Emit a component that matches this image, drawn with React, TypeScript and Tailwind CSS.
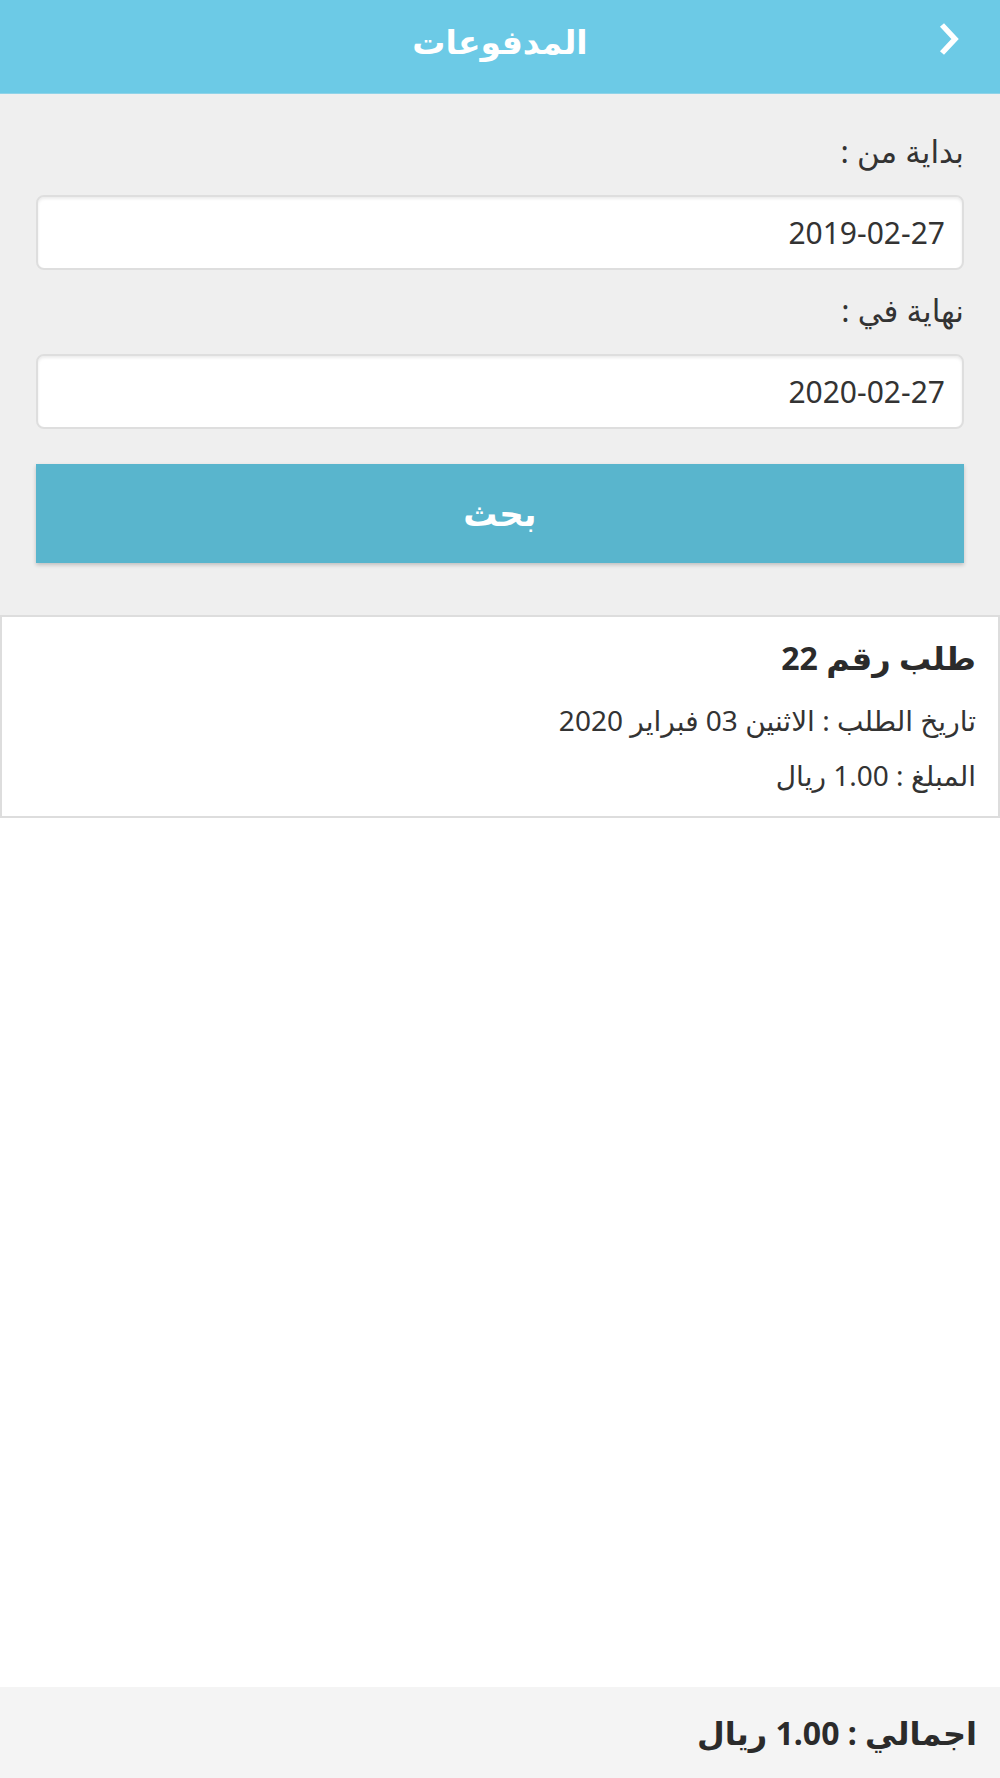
import React from "react";

const font = { fontFamily: '"Noto Sans", "DejaVu Sans", sans-serif' };

function DateField({ label, value }: { label: string; value: string }) {
  return (
    <div className="flex flex-col">
      <label className="text-[31px] leading-[40px] text-[#333]">{label}</label>
      <div className="mt-[24px] h-[75px] flex items-center pr-[17px] rounded-lg border-2 border-[#dedede] bg-white shadow-[inset_0_2px_3px_rgba(0,0,0,0.08)] text-[30px] text-[#333]">
        {value}
      </div>
    </div>
  );
}

export default function App() {
  return (
    <div dir="rtl" style={font} className="min-h-[1778px] w-full flex flex-col bg-white">
      <header className="h-[94px] pb-[10px] grid grid-cols-[1fr_auto_1fr] items-center bg-[#6ccae6] border-b border-[#8fd3e8]">
        <div className="flex pr-[38px] pb-[6px]">
          <svg width="26" height="34" viewBox="0 0 26 34" fill="none">
            <polyline points="6,3 19,17 6,31" stroke="white" strokeWidth="5.5" strokeLinejoin="miter" />
          </svg>
        </div>
        <h1 className="text-[33px] font-bold text-white">المدفوعات</h1>
        <div />
      </header>

      <section className="bg-[#efefef] px-[36px] pt-[37px] pb-[52px]">
        <DateField label="بداية من :" value="2019-02-27" />
        <div className="mt-[20px]">
          <DateField label="نهاية في :" value="2020-02-27" />
        </div>
        <button className="mt-[35px] w-full h-[99px] bg-[#59b5cd] text-white text-[34px] font-bold shadow-[0_2px_4px_rgba(0,0,0,0.2)]">
          بحث
        </button>
      </section>

      <div className="border-y-2 border-x-2 border-[#dddddd] bg-white pr-[22px] pt-[19px] pb-[21px] text-[#333]">
        <h2 className="text-[32px] leading-[44px] font-bold text-[#2b2b2b]">طلب رقم 22</h2>
        <p className="mt-[20px] text-[28px] leading-[40px]">تاريخ الطلب : الاثنين 03 فبراير 2020</p>
        <p className="mt-[15px] text-[28px] leading-[40px]">المبلغ : 1.00 ريال</p>
      </div>

      <div className="flex-1" />

      <footer className="h-[91px] flex items-center pr-[23px] bg-[#f4f4f4]">
        <span className="text-[32px] font-bold text-[#2b2b2b]">اجمالي : 1.00 ريال</span>
      </footer>
    </div>
  );
}
